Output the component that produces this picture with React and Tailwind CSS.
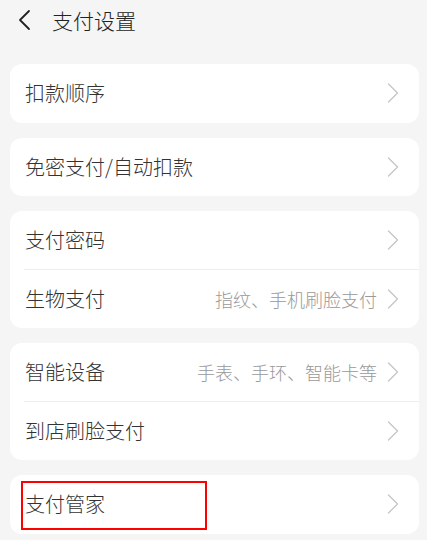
const groups = [
  [{ label: '扣款顺序' }],
  [{ label: '免密支付/自动扣款' }],
  [{ label: '支付密码' }, { label: '生物支付', value: '指纹、手机刷脸支付' }],
  [{ label: '智能设备', value: '手表、手环、智能卡等' }, { label: '到店刷脸支付' }],
  [{ label: '支付管家', marked: true }],
];

function Chevron() {
  return (
    <svg width="12" height="20" viewBox="0 0 12 20" fill="none" className="shrink-0">
      <path d="M1.5 1 L10.5 10 L1.5 19" stroke="#c6c6c6" strokeWidth="1.3" strokeLinecap="round" strokeLinejoin="round" />
    </svg>
  );
}

function Row({ item, last }) {
  return (
    <div className="relative h-[58.5px] flex items-center pl-[15px] pr-[20px]">
      <span className="text-[20px] text-[#333] leading-none font-light">{item.label}</span>
      <div className="ml-auto flex items-center gap-[10px]">
        {item.value && <span className="text-[18px] text-[#999] leading-none font-light">{item.value}</span>}
        <Chevron />
      </div>
      {!last && <div className="absolute left-[14px] right-0 bottom-0 h-px bg-[#eeeeee]" />}
      {item.marked && (
        <div className="absolute left-[11px] top-[6px] w-[186px] h-[49px] border-2 border-[#ff0000]" />
      )}
    </div>
  );
}

export default function App() {
  return (
    <div
      className="w-[427px] h-[540px] overflow-hidden bg-[#f5f5f5]"
      style={{ fontFamily: '"Noto Sans CJK SC", "Noto Sans", sans-serif' }}
    >
      <div className="h-[40px] flex items-center pl-[17px]">
        <svg width="14" height="22" viewBox="0 0 14 22" fill="none">
          <path d="M12 2 L3 11 L12 20" stroke="#222" strokeWidth="1.8" strokeLinecap="round" strokeLinejoin="round" />
        </svg>
        <span className="ml-[21px] text-[21px] text-[#222] leading-none font-light">支付设置</span>
      </div>
      <div className="pt-[24px] pl-[10px] pr-[8px] flex flex-col gap-[15px]">
        {groups.map((rows, i) => (
          <div key={i} className="bg-white rounded-[12px]">
            {rows.map((item, j) => (
              <Row key={j} item={item} last={j === rows.length - 1} />
            ))}
          </div>
        ))}
      </div>
    </div>
  );
}
